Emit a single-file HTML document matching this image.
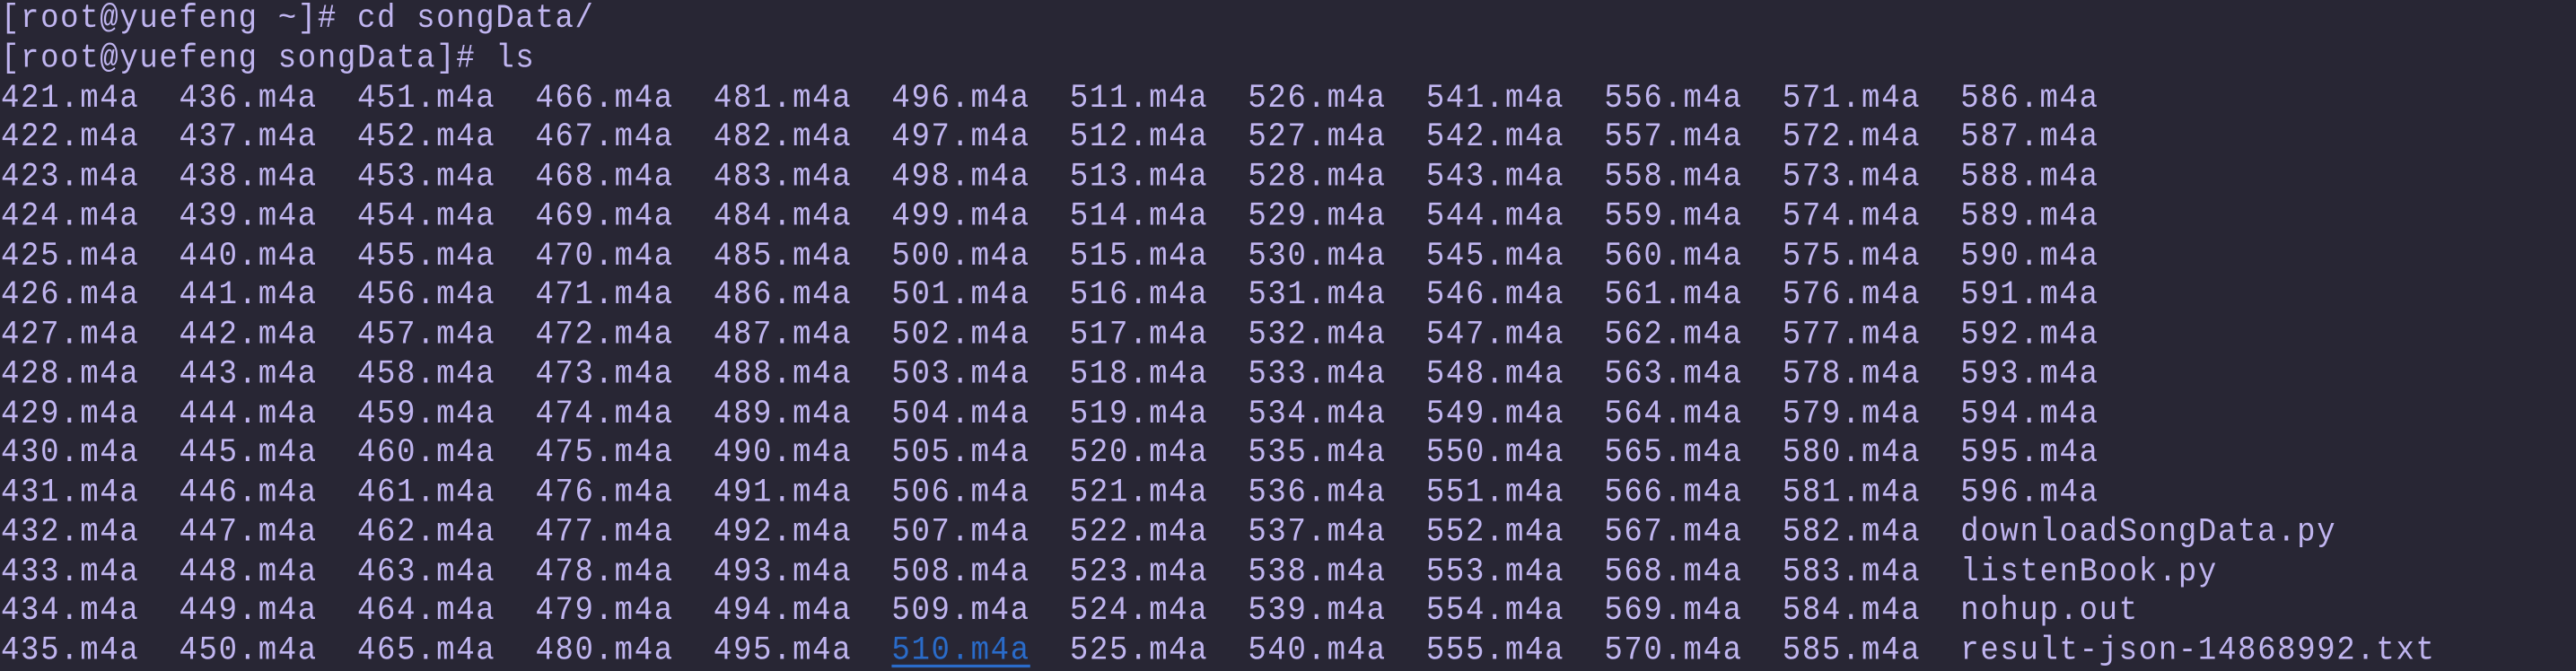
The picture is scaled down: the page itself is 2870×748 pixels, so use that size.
<!DOCTYPE html>
<html><head><meta charset="utf-8"><style>
html,body{margin:0;padding:0;background:#282634;width:2870px;height:748px;overflow:hidden}
pre{margin:0;padding:0 0 0 1px;font-family:"Liberation Mono",monospace;font-size:34px;letter-spacing:1.65px;line-height:40.75px;color:#c0b5f0;white-space:pre;position:relative;top:0px;transform:scaleY(1.08);transform-origin:0 0}
a{color:#2a6bc9;text-decoration:underline;text-underline-offset:6px;text-decoration-thickness:3px}
</style></head><body><pre>[root@yuefeng ~]# cd songData/
[root@yuefeng songData]# ls
421.m4a  436.m4a  451.m4a  466.m4a  481.m4a  496.m4a  511.m4a  526.m4a  541.m4a  556.m4a  571.m4a  586.m4a
422.m4a  437.m4a  452.m4a  467.m4a  482.m4a  497.m4a  512.m4a  527.m4a  542.m4a  557.m4a  572.m4a  587.m4a
423.m4a  438.m4a  453.m4a  468.m4a  483.m4a  498.m4a  513.m4a  528.m4a  543.m4a  558.m4a  573.m4a  588.m4a
424.m4a  439.m4a  454.m4a  469.m4a  484.m4a  499.m4a  514.m4a  529.m4a  544.m4a  559.m4a  574.m4a  589.m4a
425.m4a  440.m4a  455.m4a  470.m4a  485.m4a  500.m4a  515.m4a  530.m4a  545.m4a  560.m4a  575.m4a  590.m4a
426.m4a  441.m4a  456.m4a  471.m4a  486.m4a  501.m4a  516.m4a  531.m4a  546.m4a  561.m4a  576.m4a  591.m4a
427.m4a  442.m4a  457.m4a  472.m4a  487.m4a  502.m4a  517.m4a  532.m4a  547.m4a  562.m4a  577.m4a  592.m4a
428.m4a  443.m4a  458.m4a  473.m4a  488.m4a  503.m4a  518.m4a  533.m4a  548.m4a  563.m4a  578.m4a  593.m4a
429.m4a  444.m4a  459.m4a  474.m4a  489.m4a  504.m4a  519.m4a  534.m4a  549.m4a  564.m4a  579.m4a  594.m4a
430.m4a  445.m4a  460.m4a  475.m4a  490.m4a  505.m4a  520.m4a  535.m4a  550.m4a  565.m4a  580.m4a  595.m4a
431.m4a  446.m4a  461.m4a  476.m4a  491.m4a  506.m4a  521.m4a  536.m4a  551.m4a  566.m4a  581.m4a  596.m4a
432.m4a  447.m4a  462.m4a  477.m4a  492.m4a  507.m4a  522.m4a  537.m4a  552.m4a  567.m4a  582.m4a  downloadSongData.py
433.m4a  448.m4a  463.m4a  478.m4a  493.m4a  508.m4a  523.m4a  538.m4a  553.m4a  568.m4a  583.m4a  listenBook.py
434.m4a  449.m4a  464.m4a  479.m4a  494.m4a  509.m4a  524.m4a  539.m4a  554.m4a  569.m4a  584.m4a  nohup.out
435.m4a  450.m4a  465.m4a  480.m4a  495.m4a  <a>510.m4a</a>  525.m4a  540.m4a  555.m4a  570.m4a  585.m4a  result-json-14868992.txt</pre></body></html>
